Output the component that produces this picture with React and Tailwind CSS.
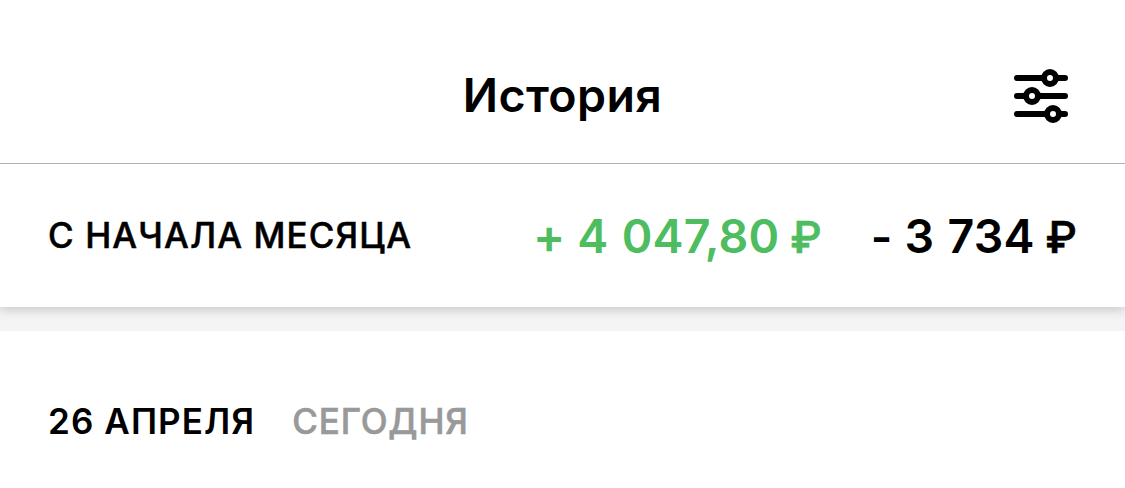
function Amount({ sign, value, className }) {
  return (
    <span className={`flex items-baseline ${className}`}>
      {sign}
      <span className="ml-[12px] tracking-[0.15px] [word-spacing:1.5px]">{value}</span>
      <span className="ml-[11px] text-[44px] leading-none font-medium [-webkit-text-stroke:0.7px_currentColor]">₽</span>
    </span>
  );
}

export default function App() {
  return (
    <div className="flex h-[488px] w-[1125px] flex-col overflow-hidden bg-white font-['Inter',sans-serif] text-black">
      <header className="relative z-10 flex h-[307px] shrink-0 flex-col bg-white shadow-[0_3px_10px_rgba(0,0,0,0.18)]">
        <div className="grid h-[164px] grid-cols-3 items-center border-b border-[#b2b2b2] px-[57px] pt-[28px]">
          <span />
          <h1 className="pb-[2px] text-center text-[46.5px] leading-[60px] font-semibold tracking-[0.4px]">История</h1>
          <svg className="h-[54px] w-[54px] justify-self-end" viewBox="0 0 54 54" fill="none" stroke="black" strokeWidth="6" strokeLinecap="round">
            <path d="M3 9H30M42 9H51M3 27H12M24 27H51M3 45H33M45 45H51" />
            <circle cx="36" cy="9" r="6" />
            <circle cx="18" cy="27" r="6" />
            <circle cx="39" cy="45" r="6" />
          </svg>
        </div>
        <div className="flex flex-1 items-center justify-between pr-[48px] pl-[48px]">
          <span className="text-[35px] font-medium tracking-[1.1px] whitespace-nowrap [-webkit-text-stroke:0.5px_currentColor]">С НАЧАЛА МЕСЯЦА</span>
          <div className="flex gap-[49px] pt-[2px] text-[46.5px] font-semibold whitespace-nowrap">
            <Amount className="text-[#4dbd5f]" value="4 047,80" sign={<span className="text-[48px] leading-none">+</span>} />
            <Amount className="text-black" value="3 734" sign={<span className="relative top-[1px]">-</span>} />
          </div>
        </div>
      </header>
      <div className="h-[24px] shrink-0 bg-[#f4f4f4]" />
      <main className="flex flex-1 items-center gap-[37px] px-[48px] pt-[24px] text-[35px]">
        <span className="font-semibold tracking-[1.1px]">26 АПРЕЛЯ</span>
        <span className="font-medium tracking-[0.8px] text-[#999999] [-webkit-text-stroke:0.6px_currentColor]">СЕГОДНЯ</span>
      </main>
    </div>
  );
}
